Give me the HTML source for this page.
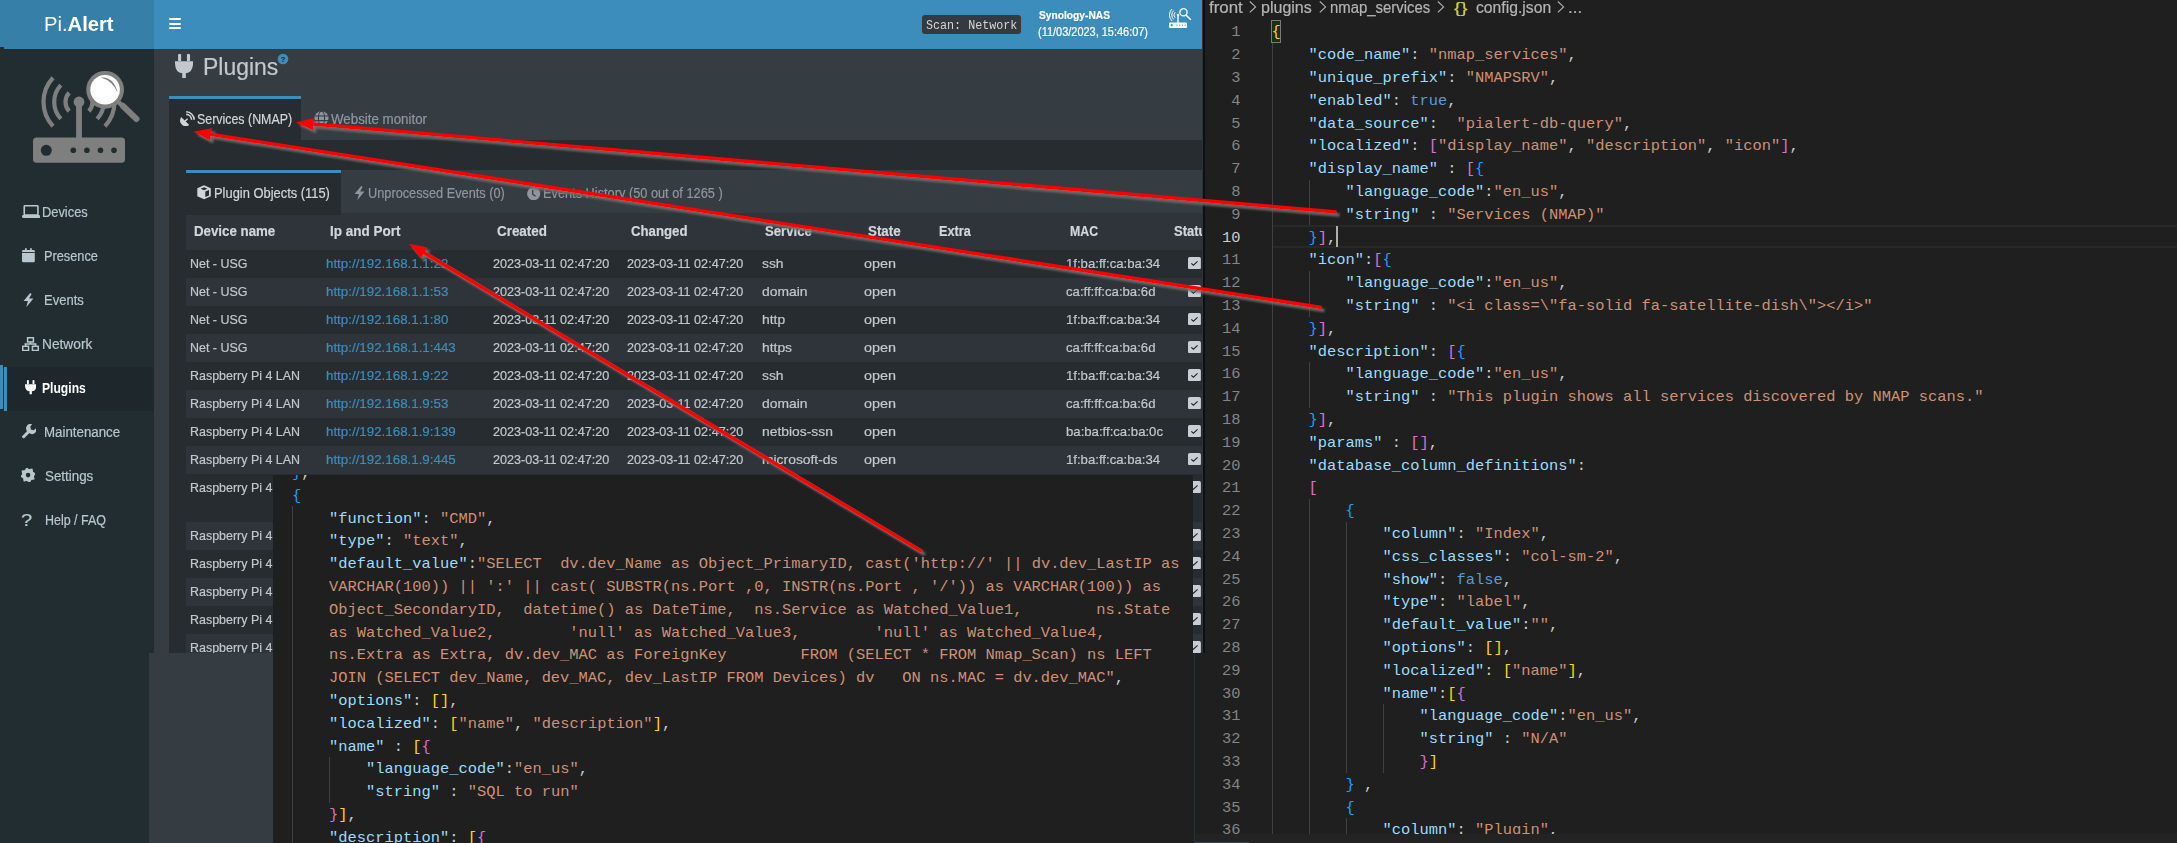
<!DOCTYPE html>
<html><head><meta charset="utf-8">
<style>
*{margin:0;padding:0;box-sizing:border-box}
html,body{width:2177px;height:843px;overflow:hidden;background:#1f1f1f}
body{position:relative;font-family:"Liberation Sans",sans-serif}
.a{position:absolute}
.t{position:absolute;white-space:pre;line-height:1;-webkit-text-stroke:0.2px currentColor}
#web{position:absolute;left:0;top:0;width:1203px;height:653px;overflow:hidden;background:#353c42}
.cl{position:absolute;white-space:pre;font-family:"Liberation Mono",monospace;font-size:15.42px;line-height:22.8px;height:22.8px}
svg{position:absolute}
</style></head><body>

<div id="web">
<div class="a" style="left:0px;top:0px;width:154px;height:49px;background:#367fa9;"></div>
<div class="a" style="left:154px;top:0px;width:1049px;height:49px;background:#3c8dbc;"></div>
<div class="a" style="left:0px;top:49px;width:154px;height:604px;background:#222d32;"></div>
<div class="t" style="left:44px;top:13.7px;font-size:20.5px;color:#fff;letter-spacing:0px;transform:scaleX(0.985);transform-origin:0 0;-webkit-text-stroke:0">Pi.<b>Alert</b></div>
<div class="a" style="left:0px;top:47px;width:4px;height:2px;background:#222d32;"></div>
<div class="a" style="left:169px;top:18.2px;width:12.4px;height:2.3px;background:#fff;border-radius:1px"></div>
<div class="a" style="left:169px;top:22.5px;width:12.4px;height:2.3px;background:#fff;border-radius:1px"></div>
<div class="a" style="left:169px;top:26.8px;width:12.4px;height:2.3px;background:#fff;border-radius:1px"></div>
<div class="a" style="left:922px;top:15px;width:99px;height:19px;background:#343a40;border-radius:3px"></div>
<div class="t" style="left:925.95px;top:19.82px;font-size:12.5px;color:#d6d6d6;font-weight:normal;letter-spacing:0px;font-family:'Liberation Mono',monospace;transform:scaleX(0.9367);transform-origin:0 0;-webkit-text-stroke:0;">Scan: Network</div>
<div class="t" style="left:1038.71px;top:9.18px;font-size:11.6px;color:#ffffff;font-weight:bold;letter-spacing:0px;font-family:'Liberation Sans',sans-serif;transform:scaleX(0.8813);transform-origin:0 0;">Synology-NAS</div>
<div class="t" style="left:1038.32px;top:25.99px;font-size:12.3px;color:#ffffff;font-weight:normal;letter-spacing:0px;font-family:'Liberation Sans',sans-serif;transform:scaleX(0.8907);transform-origin:0 0;">(11/03/2023, 15:46:07)</div>
<svg style="left:0;top:49px" width="154" height="140" viewBox="0 49 154 140">
<g fill="#7f7f7f">
<rect x="33" y="137.5" width="92" height="25.3" rx="3.5"/>
<rect x="76.1" y="101" width="5.8" height="37"/>
<circle cx="79" cy="102" r="5.4"/>
</g>
<g fill="#222d32"><circle cx="46.3" cy="150.3" r="5.5"/><circle cx="73.3" cy="150.3" r="2.8"/><circle cx="86.9" cy="150.3" r="2.8"/><circle cx="100.5" cy="150.3" r="2.8"/><circle cx="114" cy="150.3" r="2.8"/></g>
<g fill="none" stroke="#7f7f7f" stroke-width="4.2"><path d="M69.13,111.21 A13.5,13.5 0 0 1 69.13,92.79"/><path d="M88.87,92.79 A13.5,13.5 0 0 1 88.87,111.21"/><path d="M60.86,118.91 A24.8,24.8 0 0 1 60.86,85.09"/><path d="M97.14,85.09 A24.8,24.8 0 0 1 97.14,118.91"/><path d="M53.04,126.21 A35.5,35.5 0 0 1 53.04,77.79"/><path d="M104.96,77.79 A35.5,35.5 0 0 1 104.96,126.21"/></g>
<line x1="116" y1="100" x2="124" y2="107" stroke="#7f7f7f" stroke-width="4.6"/>
<line x1="123" y1="106" x2="136.5" y2="119" stroke="#7f7f7f" stroke-width="6" stroke-linecap="round"/>
<circle cx="105.1" cy="89.8" r="18.9" fill="#7f7f7f"/>
<circle cx="105.1" cy="89.8" r="14.8" fill="#ffffff"/>
<path d="M 100.5 77.2 Q 114 77 117.5 92.5 Q 113 81 100.5 77.2 Z" fill="#7f7f7f"/>
</svg>
<div class="a" style="left:7px;top:367px;width:147px;height:44px;background:#1e282c;"></div>
<div class="a" style="left:0px;top:365px;width:2.5px;height:44px;background:#3c8dbc;"></div>
<div class="a" style="left:4px;top:367px;width:3px;height:44px;background:#3c8dbc;"></div>
<div class="t" style="left:41.75px;top:205.25px;font-size:14px;color:#b8c7ce;font-weight:normal;letter-spacing:0px;font-family:'Liberation Sans',sans-serif;transform:scaleX(0.9182);transform-origin:0 0;">Devices</div>
<div class="t" style="left:44.45px;top:249.25px;font-size:14px;color:#b8c7ce;font-weight:normal;letter-spacing:0px;font-family:'Liberation Sans',sans-serif;transform:scaleX(0.9116);transform-origin:0 0;">Presence</div>
<div class="t" style="left:44.43px;top:293.25px;font-size:14px;color:#b8c7ce;font-weight:normal;letter-spacing:0px;font-family:'Liberation Sans',sans-serif;transform:scaleX(0.9284);transform-origin:0 0;">Events</div>
<div class="t" style="left:41.67px;top:337.25px;font-size:14px;color:#b8c7ce;font-weight:normal;letter-spacing:0px;font-family:'Liberation Sans',sans-serif;transform:scaleX(0.9798);transform-origin:0 0;">Network</div>
<div class="t" style="left:41.89px;top:381.25px;font-size:14px;color:#ffffff;font-weight:bold;letter-spacing:0px;font-family:'Liberation Sans',sans-serif;transform:scaleX(0.8665);transform-origin:0 0;-webkit-text-stroke:0;">Plugins</div>
<div class="t" style="left:44.41px;top:425.25px;font-size:14px;color:#b8c7ce;font-weight:normal;letter-spacing:0px;font-family:'Liberation Sans',sans-serif;transform:scaleX(0.9490);transform-origin:0 0;">Maintenance</div>
<div class="t" style="left:44.59px;top:469.25px;font-size:14px;color:#b8c7ce;font-weight:normal;letter-spacing:0px;font-family:'Liberation Sans',sans-serif;transform:scaleX(0.9546);transform-origin:0 0;">Settings</div>
<div class="t" style="left:44.68px;top:513.25px;font-size:14px;color:#b8c7ce;font-weight:normal;letter-spacing:0px;font-family:'Liberation Sans',sans-serif;transform:scaleX(0.8899);transform-origin:0 0;">Help / FAQ</div>
<div class="t" style="left:203.12px;top:55.93px;font-size:23px;color:#c2c8cd;font-weight:normal;letter-spacing:0px;font-family:'Liberation Sans',sans-serif;transform:scaleX(0.9970);transform-origin:0 0;">Plugins</div>
<svg style="left:277px;top:53px" width="12" height="12"><circle cx="6" cy="6" r="5.3" fill="#3c8dbc"/><text x="6" y="9" font-size="7.5" text-anchor="middle" fill="#223" font-family="Liberation Sans" font-weight="bold">?</text></svg>
<div class="a" style="left:169px;top:96px;width:132px;height:3px;background:#3c8dbc;"></div>
<div class="a" style="left:169px;top:99px;width:132px;height:41px;background:#272c30;"></div>
<div class="a" style="left:169px;top:140px;width:1034px;height:513px;background:#272c30;"></div>
<div class="t" style="left:197.04px;top:112.15px;font-size:14px;color:#d2d6da;font-weight:normal;letter-spacing:0px;font-family:'Liberation Sans',sans-serif;transform:scaleX(0.8862);transform-origin:0 0;">Services (NMAP)</div>
<div class="t" style="left:331.34px;top:112.15px;font-size:14px;color:#8f979e;font-weight:normal;letter-spacing:0px;font-family:'Liberation Sans',sans-serif;transform:scaleX(0.9519);transform-origin:0 0;">Website monitor</div>
<div class="a" style="left:186px;top:170px;width:1017px;height:43px;background:#353c42;"></div>
<div class="a" style="left:186px;top:170px;width:155px;height:3px;background:#3c8dbc;"></div>
<div class="a" style="left:186px;top:173px;width:155px;height:41px;background:#272c30;"></div>
<div class="t" style="left:213.74px;top:185.95px;font-size:14px;color:#d2d6da;font-weight:normal;letter-spacing:0px;font-family:'Liberation Sans',sans-serif;transform:scaleX(0.9213);transform-origin:0 0;">Plugin Objects (115)</div>
<div class="t" style="left:367.72px;top:185.95px;font-size:14px;color:#8f979e;font-weight:normal;letter-spacing:0px;font-family:'Liberation Sans',sans-serif;transform:scaleX(0.9107);transform-origin:0 0;">Unprocessed Events (0)</div>
<div class="t" style="left:543.45px;top:185.95px;font-size:14px;color:#8f979e;font-weight:normal;letter-spacing:0px;font-family:'Liberation Sans',sans-serif;transform:scaleX(0.9125);transform-origin:0 0;">Events History (50 out of 1265 )</div>
<div class="a" style="left:186px;top:213px;width:1017px;height:37px;background:#2e3439;"></div>
<div class="t" style="left:193.81px;top:224.35px;font-size:14px;color:#d2d6da;font-weight:bold;letter-spacing:0px;font-family:'Liberation Sans',sans-serif;transform:scaleX(0.9490);transform-origin:0 0;">Device name</div>
<div class="t" style="left:329.50px;top:224.35px;font-size:14px;color:#d2d6da;font-weight:bold;letter-spacing:0px;font-family:'Liberation Sans',sans-serif;transform:scaleX(0.9638);transform-origin:0 0;">Ip and Port</div>
<div class="t" style="left:496.65px;top:224.35px;font-size:14px;color:#d2d6da;font-weight:bold;letter-spacing:0px;font-family:'Liberation Sans',sans-serif;transform:scaleX(0.9579);transform-origin:0 0;">Created</div>
<div class="t" style="left:630.76px;top:224.35px;font-size:14px;color:#d2d6da;font-weight:bold;letter-spacing:0px;font-family:'Liberation Sans',sans-serif;transform:scaleX(0.9436);transform-origin:0 0;">Changed</div>
<div class="t" style="left:765.42px;top:224.35px;font-size:14px;color:#d2d6da;font-weight:bold;letter-spacing:0px;font-family:'Liberation Sans',sans-serif;transform:scaleX(0.9400);transform-origin:0 0;">Service</div>
<div class="t" style="left:868.22px;top:224.35px;font-size:14px;color:#d2d6da;font-weight:bold;letter-spacing:0px;font-family:'Liberation Sans',sans-serif;transform:scaleX(0.9535);transform-origin:0 0;">State</div>
<div class="t" style="left:939.45px;top:224.35px;font-size:14px;color:#d2d6da;font-weight:bold;letter-spacing:0px;font-family:'Liberation Sans',sans-serif;transform:scaleX(0.9042);transform-origin:0 0;">Extra</div>
<div class="t" style="left:1069.98px;top:224.35px;font-size:14px;color:#d2d6da;font-weight:bold;letter-spacing:0px;font-family:'Liberation Sans',sans-serif;transform:scaleX(0.8801);transform-origin:0 0;">MAC</div>
<div class="t" style="left:1174.02px;top:224.35px;font-size:14px;color:#d2d6da;font-weight:bold;letter-spacing:0px;font-family:'Liberation Sans',sans-serif;transform:scaleX(0.9300);transform-origin:0 0;">Status</div>
<div class="a" style="left:186px;top:213px;width:155px;height:1.7px;background:#272c30;"></div>
<div class="a" style="left:186px;top:250px;width:1017px;height:28px;background:#272c30;"></div>
<div class="t" style="left:190.48px;top:256.66px;font-size:13.4px;color:#c2c8cd;font-weight:normal;letter-spacing:0px;font-family:'Liberation Sans',sans-serif;transform:scaleX(0.9300);transform-origin:0 0;">Net - USG</div>
<div class="t" style="left:325.67px;top:256.66px;font-size:13.4px;color:#3c8dbc;font-weight:normal;letter-spacing:0px;font-family:'Liberation Sans',sans-serif;transform:scaleX(0.9957);transform-origin:0 0;">http://192.168.1.1:22</div>
<div class="t" style="left:492.97px;top:256.66px;font-size:13.4px;color:#c2c8cd;font-weight:normal;letter-spacing:0px;font-family:'Liberation Sans',sans-serif;transform:scaleX(0.9421);transform-origin:0 0;">2023-03-11 02:47:20</div>
<div class="t" style="left:627.47px;top:256.66px;font-size:13.4px;color:#c2c8cd;font-weight:normal;letter-spacing:0px;font-family:'Liberation Sans',sans-serif;transform:scaleX(0.9421);transform-origin:0 0;">2023-03-11 02:47:20</div>
<div class="t" style="left:762.11px;top:256.66px;font-size:13.4px;color:#c2c8cd;font-weight:normal;letter-spacing:0px;font-family:'Liberation Sans',sans-serif;transform:scaleX(1.0350);transform-origin:0 0;">ssh</div>
<div class="t" style="left:864.20px;top:256.66px;font-size:13.4px;color:#c2c8cd;font-weight:normal;letter-spacing:0px;font-family:'Liberation Sans',sans-serif;transform:scaleX(1.0748);transform-origin:0 0;">open</div>
<div class="t" style="left:1066.00px;top:256.66px;font-size:13.4px;color:#c2c8cd;font-weight:normal;letter-spacing:0px;font-family:'Liberation Sans',sans-serif;transform:scaleX(0.9822);transform-origin:0 0;">1f:ba:ff:ca:ba:34</div>
<svg style="left:1187.8px;top:256.6px" width="13" height="12.4"><rect x="0" y="0" width="12.9" height="12.3" rx="1.8" fill="#c9ced4"/><path d="M3.3,6.3 L5.4,8.2 L9.6,4.3" fill="none" stroke="#1e2226" stroke-width="1.1"/></svg>
<div class="a" style="left:186px;top:278px;width:1017px;height:28px;background:#2e3439;"></div>
<div class="t" style="left:190.48px;top:284.66px;font-size:13.4px;color:#c2c8cd;font-weight:normal;letter-spacing:0px;font-family:'Liberation Sans',sans-serif;transform:scaleX(0.9300);transform-origin:0 0;">Net - USG</div>
<div class="t" style="left:325.67px;top:284.66px;font-size:13.4px;color:#3c8dbc;font-weight:normal;letter-spacing:0px;font-family:'Liberation Sans',sans-serif;transform:scaleX(0.9957);transform-origin:0 0;">http://192.168.1.1:53</div>
<div class="t" style="left:492.97px;top:284.66px;font-size:13.4px;color:#c2c8cd;font-weight:normal;letter-spacing:0px;font-family:'Liberation Sans',sans-serif;transform:scaleX(0.9421);transform-origin:0 0;">2023-03-11 02:47:20</div>
<div class="t" style="left:627.47px;top:284.66px;font-size:13.4px;color:#c2c8cd;font-weight:normal;letter-spacing:0px;font-family:'Liberation Sans',sans-serif;transform:scaleX(0.9421);transform-origin:0 0;">2023-03-11 02:47:20</div>
<div class="t" style="left:761.92px;top:284.66px;font-size:13.4px;color:#c2c8cd;font-weight:normal;letter-spacing:0px;font-family:'Liberation Sans',sans-serif;transform:scaleX(1.0350);transform-origin:0 0;">domain</div>
<div class="t" style="left:864.20px;top:284.66px;font-size:13.4px;color:#c2c8cd;font-weight:normal;letter-spacing:0px;font-family:'Liberation Sans',sans-serif;transform:scaleX(1.0748);transform-origin:0 0;">open</div>
<div class="t" style="left:1066.44px;top:284.66px;font-size:13.4px;color:#c2c8cd;font-weight:normal;letter-spacing:0px;font-family:'Liberation Sans',sans-serif;transform:scaleX(0.9822);transform-origin:0 0;">ca:ff:ff:ca:ba:6d</div>
<svg style="left:1187.8px;top:284.6px" width="13" height="12.4"><rect x="0" y="0" width="12.9" height="12.3" rx="1.8" fill="#c9ced4"/><path d="M3.3,6.3 L5.4,8.2 L9.6,4.3" fill="none" stroke="#1e2226" stroke-width="1.1"/></svg>
<div class="a" style="left:186px;top:306px;width:1017px;height:28px;background:#272c30;"></div>
<div class="t" style="left:190.48px;top:312.66px;font-size:13.4px;color:#c2c8cd;font-weight:normal;letter-spacing:0px;font-family:'Liberation Sans',sans-serif;transform:scaleX(0.9300);transform-origin:0 0;">Net - USG</div>
<div class="t" style="left:325.67px;top:312.66px;font-size:13.4px;color:#3c8dbc;font-weight:normal;letter-spacing:0px;font-family:'Liberation Sans',sans-serif;transform:scaleX(0.9957);transform-origin:0 0;">http://192.168.1.1:80</div>
<div class="t" style="left:492.97px;top:312.66px;font-size:13.4px;color:#c2c8cd;font-weight:normal;letter-spacing:0px;font-family:'Liberation Sans',sans-serif;transform:scaleX(0.9421);transform-origin:0 0;">2023-03-11 02:47:20</div>
<div class="t" style="left:627.47px;top:312.66px;font-size:13.4px;color:#c2c8cd;font-weight:normal;letter-spacing:0px;font-family:'Liberation Sans',sans-serif;transform:scaleX(0.9421);transform-origin:0 0;">2023-03-11 02:47:20</div>
<div class="t" style="left:761.54px;top:312.66px;font-size:13.4px;color:#c2c8cd;font-weight:normal;letter-spacing:0px;font-family:'Liberation Sans',sans-serif;transform:scaleX(1.0350);transform-origin:0 0;">http</div>
<div class="t" style="left:864.20px;top:312.66px;font-size:13.4px;color:#c2c8cd;font-weight:normal;letter-spacing:0px;font-family:'Liberation Sans',sans-serif;transform:scaleX(1.0748);transform-origin:0 0;">open</div>
<div class="t" style="left:1066.00px;top:312.66px;font-size:13.4px;color:#c2c8cd;font-weight:normal;letter-spacing:0px;font-family:'Liberation Sans',sans-serif;transform:scaleX(0.9822);transform-origin:0 0;">1f:ba:ff:ca:ba:34</div>
<svg style="left:1187.8px;top:312.6px" width="13" height="12.4"><rect x="0" y="0" width="12.9" height="12.3" rx="1.8" fill="#c9ced4"/><path d="M3.3,6.3 L5.4,8.2 L9.6,4.3" fill="none" stroke="#1e2226" stroke-width="1.1"/></svg>
<div class="a" style="left:186px;top:334px;width:1017px;height:28px;background:#2e3439;"></div>
<div class="t" style="left:190.48px;top:340.66px;font-size:13.4px;color:#c2c8cd;font-weight:normal;letter-spacing:0px;font-family:'Liberation Sans',sans-serif;transform:scaleX(0.9300);transform-origin:0 0;">Net - USG</div>
<div class="t" style="left:325.67px;top:340.66px;font-size:13.4px;color:#3c8dbc;font-weight:normal;letter-spacing:0px;font-family:'Liberation Sans',sans-serif;transform:scaleX(0.9957);transform-origin:0 0;">http://192.168.1.1:443</div>
<div class="t" style="left:492.97px;top:340.66px;font-size:13.4px;color:#c2c8cd;font-weight:normal;letter-spacing:0px;font-family:'Liberation Sans',sans-serif;transform:scaleX(0.9421);transform-origin:0 0;">2023-03-11 02:47:20</div>
<div class="t" style="left:627.47px;top:340.66px;font-size:13.4px;color:#c2c8cd;font-weight:normal;letter-spacing:0px;font-family:'Liberation Sans',sans-serif;transform:scaleX(0.9421);transform-origin:0 0;">2023-03-11 02:47:20</div>
<div class="t" style="left:761.54px;top:340.66px;font-size:13.4px;color:#c2c8cd;font-weight:normal;letter-spacing:0px;font-family:'Liberation Sans',sans-serif;transform:scaleX(1.0350);transform-origin:0 0;">https</div>
<div class="t" style="left:864.20px;top:340.66px;font-size:13.4px;color:#c2c8cd;font-weight:normal;letter-spacing:0px;font-family:'Liberation Sans',sans-serif;transform:scaleX(1.0748);transform-origin:0 0;">open</div>
<div class="t" style="left:1066.44px;top:340.66px;font-size:13.4px;color:#c2c8cd;font-weight:normal;letter-spacing:0px;font-family:'Liberation Sans',sans-serif;transform:scaleX(0.9822);transform-origin:0 0;">ca:ff:ff:ca:ba:6d</div>
<svg style="left:1187.8px;top:340.6px" width="13" height="12.4"><rect x="0" y="0" width="12.9" height="12.3" rx="1.8" fill="#c9ced4"/><path d="M3.3,6.3 L5.4,8.2 L9.6,4.3" fill="none" stroke="#1e2226" stroke-width="1.1"/></svg>
<div class="a" style="left:186px;top:362px;width:1017px;height:28px;background:#272c30;"></div>
<div class="t" style="left:190.48px;top:368.66px;font-size:13.4px;color:#c2c8cd;font-weight:normal;letter-spacing:0px;font-family:'Liberation Sans',sans-serif;transform:scaleX(0.9300);transform-origin:0 0;">Raspberry Pi 4 LAN</div>
<div class="t" style="left:325.67px;top:368.66px;font-size:13.4px;color:#3c8dbc;font-weight:normal;letter-spacing:0px;font-family:'Liberation Sans',sans-serif;transform:scaleX(0.9957);transform-origin:0 0;">http://192.168.1.9:22</div>
<div class="t" style="left:492.97px;top:368.66px;font-size:13.4px;color:#c2c8cd;font-weight:normal;letter-spacing:0px;font-family:'Liberation Sans',sans-serif;transform:scaleX(0.9421);transform-origin:0 0;">2023-03-11 02:47:20</div>
<div class="t" style="left:627.47px;top:368.66px;font-size:13.4px;color:#c2c8cd;font-weight:normal;letter-spacing:0px;font-family:'Liberation Sans',sans-serif;transform:scaleX(0.9421);transform-origin:0 0;">2023-03-11 02:47:20</div>
<div class="t" style="left:762.11px;top:368.66px;font-size:13.4px;color:#c2c8cd;font-weight:normal;letter-spacing:0px;font-family:'Liberation Sans',sans-serif;transform:scaleX(1.0350);transform-origin:0 0;">ssh</div>
<div class="t" style="left:864.20px;top:368.66px;font-size:13.4px;color:#c2c8cd;font-weight:normal;letter-spacing:0px;font-family:'Liberation Sans',sans-serif;transform:scaleX(1.0748);transform-origin:0 0;">open</div>
<div class="t" style="left:1066.00px;top:368.66px;font-size:13.4px;color:#c2c8cd;font-weight:normal;letter-spacing:0px;font-family:'Liberation Sans',sans-serif;transform:scaleX(0.9822);transform-origin:0 0;">1f:ba:ff:ca:ba:34</div>
<svg style="left:1187.8px;top:368.6px" width="13" height="12.4"><rect x="0" y="0" width="12.9" height="12.3" rx="1.8" fill="#c9ced4"/><path d="M3.3,6.3 L5.4,8.2 L9.6,4.3" fill="none" stroke="#1e2226" stroke-width="1.1"/></svg>
<div class="a" style="left:186px;top:390px;width:1017px;height:28px;background:#2e3439;"></div>
<div class="t" style="left:190.48px;top:396.66px;font-size:13.4px;color:#c2c8cd;font-weight:normal;letter-spacing:0px;font-family:'Liberation Sans',sans-serif;transform:scaleX(0.9300);transform-origin:0 0;">Raspberry Pi 4 LAN</div>
<div class="t" style="left:325.67px;top:396.66px;font-size:13.4px;color:#3c8dbc;font-weight:normal;letter-spacing:0px;font-family:'Liberation Sans',sans-serif;transform:scaleX(0.9957);transform-origin:0 0;">http://192.168.1.9:53</div>
<div class="t" style="left:492.97px;top:396.66px;font-size:13.4px;color:#c2c8cd;font-weight:normal;letter-spacing:0px;font-family:'Liberation Sans',sans-serif;transform:scaleX(0.9421);transform-origin:0 0;">2023-03-11 02:47:20</div>
<div class="t" style="left:627.47px;top:396.66px;font-size:13.4px;color:#c2c8cd;font-weight:normal;letter-spacing:0px;font-family:'Liberation Sans',sans-serif;transform:scaleX(0.9421);transform-origin:0 0;">2023-03-11 02:47:20</div>
<div class="t" style="left:761.92px;top:396.66px;font-size:13.4px;color:#c2c8cd;font-weight:normal;letter-spacing:0px;font-family:'Liberation Sans',sans-serif;transform:scaleX(1.0350);transform-origin:0 0;">domain</div>
<div class="t" style="left:864.20px;top:396.66px;font-size:13.4px;color:#c2c8cd;font-weight:normal;letter-spacing:0px;font-family:'Liberation Sans',sans-serif;transform:scaleX(1.0748);transform-origin:0 0;">open</div>
<div class="t" style="left:1066.44px;top:396.66px;font-size:13.4px;color:#c2c8cd;font-weight:normal;letter-spacing:0px;font-family:'Liberation Sans',sans-serif;transform:scaleX(0.9822);transform-origin:0 0;">ca:ff:ff:ca:ba:6d</div>
<svg style="left:1187.8px;top:396.6px" width="13" height="12.4"><rect x="0" y="0" width="12.9" height="12.3" rx="1.8" fill="#c9ced4"/><path d="M3.3,6.3 L5.4,8.2 L9.6,4.3" fill="none" stroke="#1e2226" stroke-width="1.1"/></svg>
<div class="a" style="left:186px;top:418px;width:1017px;height:28px;background:#272c30;"></div>
<div class="t" style="left:190.48px;top:424.66px;font-size:13.4px;color:#c2c8cd;font-weight:normal;letter-spacing:0px;font-family:'Liberation Sans',sans-serif;transform:scaleX(0.9300);transform-origin:0 0;">Raspberry Pi 4 LAN</div>
<div class="t" style="left:325.67px;top:424.66px;font-size:13.4px;color:#3c8dbc;font-weight:normal;letter-spacing:0px;font-family:'Liberation Sans',sans-serif;transform:scaleX(0.9957);transform-origin:0 0;">http://192.168.1.9:139</div>
<div class="t" style="left:492.97px;top:424.66px;font-size:13.4px;color:#c2c8cd;font-weight:normal;letter-spacing:0px;font-family:'Liberation Sans',sans-serif;transform:scaleX(0.9421);transform-origin:0 0;">2023-03-11 02:47:20</div>
<div class="t" style="left:627.47px;top:424.66px;font-size:13.4px;color:#c2c8cd;font-weight:normal;letter-spacing:0px;font-family:'Liberation Sans',sans-serif;transform:scaleX(0.9421);transform-origin:0 0;">2023-03-11 02:47:20</div>
<div class="t" style="left:761.58px;top:424.66px;font-size:13.4px;color:#c2c8cd;font-weight:normal;letter-spacing:0px;font-family:'Liberation Sans',sans-serif;transform:scaleX(1.0350);transform-origin:0 0;">netbios-ssn</div>
<div class="t" style="left:864.20px;top:424.66px;font-size:13.4px;color:#c2c8cd;font-weight:normal;letter-spacing:0px;font-family:'Liberation Sans',sans-serif;transform:scaleX(1.0748);transform-origin:0 0;">open</div>
<div class="t" style="left:1066.15px;top:424.66px;font-size:13.4px;color:#c2c8cd;font-weight:normal;letter-spacing:0px;font-family:'Liberation Sans',sans-serif;transform:scaleX(0.9822);transform-origin:0 0;">ba:ba:ff:ca:ba:0c</div>
<svg style="left:1187.8px;top:424.6px" width="13" height="12.4"><rect x="0" y="0" width="12.9" height="12.3" rx="1.8" fill="#c9ced4"/><path d="M3.3,6.3 L5.4,8.2 L9.6,4.3" fill="none" stroke="#1e2226" stroke-width="1.1"/></svg>
<div class="a" style="left:186px;top:446px;width:1017px;height:28px;background:#2e3439;"></div>
<div class="t" style="left:190.48px;top:452.66px;font-size:13.4px;color:#c2c8cd;font-weight:normal;letter-spacing:0px;font-family:'Liberation Sans',sans-serif;transform:scaleX(0.9300);transform-origin:0 0;">Raspberry Pi 4 LAN</div>
<div class="t" style="left:325.67px;top:452.66px;font-size:13.4px;color:#3c8dbc;font-weight:normal;letter-spacing:0px;font-family:'Liberation Sans',sans-serif;transform:scaleX(0.9957);transform-origin:0 0;">http://192.168.1.9:445</div>
<div class="t" style="left:492.97px;top:452.66px;font-size:13.4px;color:#c2c8cd;font-weight:normal;letter-spacing:0px;font-family:'Liberation Sans',sans-serif;transform:scaleX(0.9421);transform-origin:0 0;">2023-03-11 02:47:20</div>
<div class="t" style="left:627.47px;top:452.66px;font-size:13.4px;color:#c2c8cd;font-weight:normal;letter-spacing:0px;font-family:'Liberation Sans',sans-serif;transform:scaleX(0.9421);transform-origin:0 0;">2023-03-11 02:47:20</div>
<div class="t" style="left:761.58px;top:452.66px;font-size:13.4px;color:#c2c8cd;font-weight:normal;letter-spacing:0px;font-family:'Liberation Sans',sans-serif;transform:scaleX(1.0350);transform-origin:0 0;">microsoft-ds</div>
<div class="t" style="left:864.20px;top:452.66px;font-size:13.4px;color:#c2c8cd;font-weight:normal;letter-spacing:0px;font-family:'Liberation Sans',sans-serif;transform:scaleX(1.0748);transform-origin:0 0;">open</div>
<div class="t" style="left:1066.00px;top:452.66px;font-size:13.4px;color:#c2c8cd;font-weight:normal;letter-spacing:0px;font-family:'Liberation Sans',sans-serif;transform:scaleX(0.9822);transform-origin:0 0;">1f:ba:ff:ca:ba:34</div>
<svg style="left:1187.8px;top:452.6px" width="13" height="12.4"><rect x="0" y="0" width="12.9" height="12.3" rx="1.8" fill="#c9ced4"/><path d="M3.3,6.3 L5.4,8.2 L9.6,4.3" fill="none" stroke="#1e2226" stroke-width="1.1"/></svg>
<div class="a" style="left:186px;top:474px;width:1017px;height:48px;background:#272c30;"></div>
<div class="t" style="left:190.48px;top:480.66px;font-size:13.4px;color:#c2c8cd;font-weight:normal;letter-spacing:0px;font-family:'Liberation Sans',sans-serif;transform:scaleX(0.9300);transform-origin:0 0;">Raspberry Pi 4 LAN</div>
<div class="t" style="left:325.67px;top:480.66px;font-size:13.4px;color:#3c8dbc;font-weight:normal;letter-spacing:0px;font-family:'Liberation Sans',sans-serif;transform:scaleX(0.9957);transform-origin:0 0;">http://192.168.1.9:548</div>
<div class="t" style="left:492.97px;top:480.66px;font-size:13.4px;color:#c2c8cd;font-weight:normal;letter-spacing:0px;font-family:'Liberation Sans',sans-serif;transform:scaleX(0.9421);transform-origin:0 0;">2023-03-11 02:47:20</div>
<div class="t" style="left:627.47px;top:480.66px;font-size:13.4px;color:#c2c8cd;font-weight:normal;letter-spacing:0px;font-family:'Liberation Sans',sans-serif;transform:scaleX(0.9421);transform-origin:0 0;">2023-03-11 02:47:20</div>
<div class="t" style="left:761.91px;top:480.66px;font-size:13.4px;color:#c2c8cd;font-weight:normal;letter-spacing:0px;font-family:'Liberation Sans',sans-serif;transform:scaleX(1.0350);transform-origin:0 0;">afp</div>
<div class="t" style="left:864.20px;top:480.66px;font-size:13.4px;color:#c2c8cd;font-weight:normal;letter-spacing:0px;font-family:'Liberation Sans',sans-serif;transform:scaleX(1.0748);transform-origin:0 0;">open</div>
<div class="t" style="left:1066.00px;top:480.66px;font-size:13.4px;color:#c2c8cd;font-weight:normal;letter-spacing:0px;font-family:'Liberation Sans',sans-serif;transform:scaleX(0.9822);transform-origin:0 0;">1f:ba:ff:ca:ba:34</div>
<svg style="left:1187.8px;top:480.6px" width="13" height="12.4"><rect x="0" y="0" width="12.9" height="12.3" rx="1.8" fill="#c9ced4"/><path d="M3.3,6.3 L5.4,8.2 L9.6,4.3" fill="none" stroke="#1e2226" stroke-width="1.1"/></svg>
<div class="a" style="left:186px;top:522px;width:1017px;height:28px;background:#2e3439;"></div>
<div class="t" style="left:190.48px;top:528.66px;font-size:13.4px;color:#c2c8cd;font-weight:normal;letter-spacing:0px;font-family:'Liberation Sans',sans-serif;transform:scaleX(0.9300);transform-origin:0 0;">Raspberry Pi 4 LAN</div>
<div class="t" style="left:325.67px;top:528.66px;font-size:13.4px;color:#3c8dbc;font-weight:normal;letter-spacing:0px;font-family:'Liberation Sans',sans-serif;transform:scaleX(0.9957);transform-origin:0 0;">http://192.168.1.9:631</div>
<div class="t" style="left:492.97px;top:528.66px;font-size:13.4px;color:#c2c8cd;font-weight:normal;letter-spacing:0px;font-family:'Liberation Sans',sans-serif;transform:scaleX(0.9421);transform-origin:0 0;">2023-03-11 02:47:20</div>
<div class="t" style="left:627.47px;top:528.66px;font-size:13.4px;color:#c2c8cd;font-weight:normal;letter-spacing:0px;font-family:'Liberation Sans',sans-serif;transform:scaleX(0.9421);transform-origin:0 0;">2023-03-11 02:47:20</div>
<div class="t" style="left:761.57px;top:528.66px;font-size:13.4px;color:#c2c8cd;font-weight:normal;letter-spacing:0px;font-family:'Liberation Sans',sans-serif;transform:scaleX(1.0350);transform-origin:0 0;">ipp</div>
<div class="t" style="left:864.20px;top:528.66px;font-size:13.4px;color:#c2c8cd;font-weight:normal;letter-spacing:0px;font-family:'Liberation Sans',sans-serif;transform:scaleX(1.0748);transform-origin:0 0;">open</div>
<div class="t" style="left:1066.00px;top:528.66px;font-size:13.4px;color:#c2c8cd;font-weight:normal;letter-spacing:0px;font-family:'Liberation Sans',sans-serif;transform:scaleX(0.9822);transform-origin:0 0;">1f:ba:ff:ca:ba:34</div>
<svg style="left:1187.8px;top:528.6px" width="13" height="12.4"><rect x="0" y="0" width="12.9" height="12.3" rx="1.8" fill="#c9ced4"/><path d="M3.3,6.3 L5.4,8.2 L9.6,4.3" fill="none" stroke="#1e2226" stroke-width="1.1"/></svg>
<div class="a" style="left:186px;top:550px;width:1017px;height:28px;background:#272c30;"></div>
<div class="t" style="left:190.48px;top:556.66px;font-size:13.4px;color:#c2c8cd;font-weight:normal;letter-spacing:0px;font-family:'Liberation Sans',sans-serif;transform:scaleX(0.9300);transform-origin:0 0;">Raspberry Pi 4 LAN</div>
<div class="t" style="left:325.67px;top:556.66px;font-size:13.4px;color:#3c8dbc;font-weight:normal;letter-spacing:0px;font-family:'Liberation Sans',sans-serif;transform:scaleX(0.9957);transform-origin:0 0;">http://192.168.1.9:3389</div>
<div class="t" style="left:492.97px;top:556.66px;font-size:13.4px;color:#c2c8cd;font-weight:normal;letter-spacing:0px;font-family:'Liberation Sans',sans-serif;transform:scaleX(0.9421);transform-origin:0 0;">2023-03-11 02:47:20</div>
<div class="t" style="left:627.47px;top:556.66px;font-size:13.4px;color:#c2c8cd;font-weight:normal;letter-spacing:0px;font-family:'Liberation Sans',sans-serif;transform:scaleX(0.9421);transform-origin:0 0;">2023-03-11 02:47:20</div>
<div class="t" style="left:761.58px;top:556.66px;font-size:13.4px;color:#c2c8cd;font-weight:normal;letter-spacing:0px;font-family:'Liberation Sans',sans-serif;transform:scaleX(1.0350);transform-origin:0 0;">ms-wbt-server</div>
<div class="t" style="left:864.20px;top:556.66px;font-size:13.4px;color:#c2c8cd;font-weight:normal;letter-spacing:0px;font-family:'Liberation Sans',sans-serif;transform:scaleX(1.0748);transform-origin:0 0;">open</div>
<div class="t" style="left:1066.00px;top:556.66px;font-size:13.4px;color:#c2c8cd;font-weight:normal;letter-spacing:0px;font-family:'Liberation Sans',sans-serif;transform:scaleX(0.9822);transform-origin:0 0;">1f:ba:ff:ca:ba:34</div>
<svg style="left:1187.8px;top:556.6px" width="13" height="12.4"><rect x="0" y="0" width="12.9" height="12.3" rx="1.8" fill="#c9ced4"/><path d="M3.3,6.3 L5.4,8.2 L9.6,4.3" fill="none" stroke="#1e2226" stroke-width="1.1"/></svg>
<div class="a" style="left:186px;top:578px;width:1017px;height:28px;background:#2e3439;"></div>
<div class="t" style="left:190.48px;top:584.66px;font-size:13.4px;color:#c2c8cd;font-weight:normal;letter-spacing:0px;font-family:'Liberation Sans',sans-serif;transform:scaleX(0.9300);transform-origin:0 0;">Raspberry Pi 4 LAN</div>
<div class="t" style="left:325.67px;top:584.66px;font-size:13.4px;color:#3c8dbc;font-weight:normal;letter-spacing:0px;font-family:'Liberation Sans',sans-serif;transform:scaleX(0.9957);transform-origin:0 0;">http://192.168.1.9:5900</div>
<div class="t" style="left:492.97px;top:584.66px;font-size:13.4px;color:#c2c8cd;font-weight:normal;letter-spacing:0px;font-family:'Liberation Sans',sans-serif;transform:scaleX(0.9421);transform-origin:0 0;">2023-03-11 02:47:20</div>
<div class="t" style="left:627.47px;top:584.66px;font-size:13.4px;color:#c2c8cd;font-weight:normal;letter-spacing:0px;font-family:'Liberation Sans',sans-serif;transform:scaleX(0.9421);transform-origin:0 0;">2023-03-11 02:47:20</div>
<div class="t" style="left:762.45px;top:584.66px;font-size:13.4px;color:#c2c8cd;font-weight:normal;letter-spacing:0px;font-family:'Liberation Sans',sans-serif;transform:scaleX(1.0350);transform-origin:0 0;">vnc</div>
<div class="t" style="left:864.20px;top:584.66px;font-size:13.4px;color:#c2c8cd;font-weight:normal;letter-spacing:0px;font-family:'Liberation Sans',sans-serif;transform:scaleX(1.0748);transform-origin:0 0;">open</div>
<div class="t" style="left:1066.00px;top:584.66px;font-size:13.4px;color:#c2c8cd;font-weight:normal;letter-spacing:0px;font-family:'Liberation Sans',sans-serif;transform:scaleX(0.9822);transform-origin:0 0;">1f:ba:ff:ca:ba:34</div>
<svg style="left:1187.8px;top:584.6px" width="13" height="12.4"><rect x="0" y="0" width="12.9" height="12.3" rx="1.8" fill="#c9ced4"/><path d="M3.3,6.3 L5.4,8.2 L9.6,4.3" fill="none" stroke="#1e2226" stroke-width="1.1"/></svg>
<div class="a" style="left:186px;top:606px;width:1017px;height:28px;background:#272c30;"></div>
<div class="t" style="left:190.48px;top:612.66px;font-size:13.4px;color:#c2c8cd;font-weight:normal;letter-spacing:0px;font-family:'Liberation Sans',sans-serif;transform:scaleX(0.9300);transform-origin:0 0;">Raspberry Pi 4 LAN</div>
<div class="t" style="left:325.67px;top:612.66px;font-size:13.4px;color:#3c8dbc;font-weight:normal;letter-spacing:0px;font-family:'Liberation Sans',sans-serif;transform:scaleX(0.9957);transform-origin:0 0;">http://192.168.1.9:8080</div>
<div class="t" style="left:492.97px;top:612.66px;font-size:13.4px;color:#c2c8cd;font-weight:normal;letter-spacing:0px;font-family:'Liberation Sans',sans-serif;transform:scaleX(0.9421);transform-origin:0 0;">2023-03-11 02:47:20</div>
<div class="t" style="left:627.47px;top:612.66px;font-size:13.4px;color:#c2c8cd;font-weight:normal;letter-spacing:0px;font-family:'Liberation Sans',sans-serif;transform:scaleX(0.9421);transform-origin:0 0;">2023-03-11 02:47:20</div>
<div class="t" style="left:761.54px;top:612.66px;font-size:13.4px;color:#c2c8cd;font-weight:normal;letter-spacing:0px;font-family:'Liberation Sans',sans-serif;transform:scaleX(1.0350);transform-origin:0 0;">http-proxy</div>
<div class="t" style="left:864.20px;top:612.66px;font-size:13.4px;color:#c2c8cd;font-weight:normal;letter-spacing:0px;font-family:'Liberation Sans',sans-serif;transform:scaleX(1.0748);transform-origin:0 0;">open</div>
<div class="t" style="left:1066.00px;top:612.66px;font-size:13.4px;color:#c2c8cd;font-weight:normal;letter-spacing:0px;font-family:'Liberation Sans',sans-serif;transform:scaleX(0.9822);transform-origin:0 0;">1f:ba:ff:ca:ba:34</div>
<svg style="left:1187.8px;top:612.6px" width="13" height="12.4"><rect x="0" y="0" width="12.9" height="12.3" rx="1.8" fill="#c9ced4"/><path d="M3.3,6.3 L5.4,8.2 L9.6,4.3" fill="none" stroke="#1e2226" stroke-width="1.1"/></svg>
<div class="a" style="left:186px;top:634px;width:1017px;height:28px;background:#2e3439;"></div>
<div class="t" style="left:190.48px;top:640.66px;font-size:13.4px;color:#c2c8cd;font-weight:normal;letter-spacing:0px;font-family:'Liberation Sans',sans-serif;transform:scaleX(0.9300);transform-origin:0 0;">Raspberry Pi 4 LAN</div>
<div class="t" style="left:325.67px;top:640.66px;font-size:13.4px;color:#3c8dbc;font-weight:normal;letter-spacing:0px;font-family:'Liberation Sans',sans-serif;transform:scaleX(0.9957);transform-origin:0 0;">http://192.168.1.9:9000</div>
<div class="t" style="left:492.97px;top:640.66px;font-size:13.4px;color:#c2c8cd;font-weight:normal;letter-spacing:0px;font-family:'Liberation Sans',sans-serif;transform:scaleX(0.9421);transform-origin:0 0;">2023-03-11 02:47:20</div>
<div class="t" style="left:627.47px;top:640.66px;font-size:13.4px;color:#c2c8cd;font-weight:normal;letter-spacing:0px;font-family:'Liberation Sans',sans-serif;transform:scaleX(0.9421);transform-origin:0 0;">2023-03-11 02:47:20</div>
<div class="t" style="left:761.91px;top:640.66px;font-size:13.4px;color:#c2c8cd;font-weight:normal;letter-spacing:0px;font-family:'Liberation Sans',sans-serif;transform:scaleX(1.0350);transform-origin:0 0;">cslistener</div>
<div class="t" style="left:864.20px;top:640.66px;font-size:13.4px;color:#c2c8cd;font-weight:normal;letter-spacing:0px;font-family:'Liberation Sans',sans-serif;transform:scaleX(1.0748);transform-origin:0 0;">open</div>
<div class="t" style="left:1066.00px;top:640.66px;font-size:13.4px;color:#c2c8cd;font-weight:normal;letter-spacing:0px;font-family:'Liberation Sans',sans-serif;transform:scaleX(0.9822);transform-origin:0 0;">1f:ba:ff:ca:ba:34</div>
<svg style="left:1187.8px;top:640.6px" width="13" height="12.4"><rect x="0" y="0" width="12.9" height="12.3" rx="1.8" fill="#c9ced4"/><path d="M3.3,6.3 L5.4,8.2 L9.6,4.3" fill="none" stroke="#1e2226" stroke-width="1.1"/></svg>
<svg style="left:21.8px;top:205px" width="18.2" height="13" viewBox="0 0 18.2 13"><rect x="2.25" y="0.75" width="13.7" height="9.2" rx="0.8" fill="none" stroke="#b8c7ce" stroke-width="1.6"/><rect x="0" y="9.9" width="18.2" height="3" rx="1.3" fill="#b8c7ce"/></svg>
<svg style="left:21.8px;top:248.4px" width="12.8" height="14.2" viewBox="0 0 12.8 14.2"><rect x="0" y="2.1" width="12.8" height="12.1" rx="1.2" fill="#b8c7ce"/><rect x="3" y="0" width="1.7" height="3.4" rx="0.5" fill="#b8c7ce"/><rect x="8.1" y="0" width="1.7" height="3.4" rx="0.5" fill="#b8c7ce"/><rect x="0" y="4.1" width="12.8" height="0.9" fill="#222d32"/></svg>
<svg style="left:22.8px;top:292.5px" width="10.8" height="14.3" viewBox="0 0 10.8 14.3"><path d="M7.2,0 L0.6,8.1 L4.9,8.1 L3.3,14.2 L10.4,5.6 L6.1,5.6 L8.6,0.9 Z" fill="#b8c7ce"/></svg>
<svg style="left:22.1px;top:336.6px" width="17" height="14.2" viewBox="0 0 17 14.2"><g fill="none" stroke="#b8c7ce" stroke-width="1.5"><rect x="5.6" y="0.75" width="5.8" height="4.2"/><rect x="0.75" y="9.3" width="5.8" height="4.2"/><rect x="10.45" y="9.3" width="5.8" height="4.2"/><path d="M8.5,5 V7.1 M2.5,7.1 H14.5 M3.6,7.1 V9.3 M13.4,7.1 V9.3"/></g></svg>
<svg style="left:24.9px;top:380.4px" width="11.4" height="14.2" viewBox="0 0 11.4 14.2"><g fill="#ffffff"><rect x="1.94" y="0" width="1.94" height="4.26" rx="0.8"/><rect x="7.52" y="0" width="1.94" height="4.26" rx="0.8"/><path d="M0,4.26 H11.4 V5.68 Q11.06,11.08 6.84,11.36 V14.2 H4.56 V11.36 Q0.34,11.08 0,5.68 Z"/></g></svg>
<svg style="left:21.6px;top:424.4px" width="14.7" height="14.3" viewBox="0 0 14.7 14.3"><path d="M1.6,12.7 L7.4,6.9" stroke="#b8c7ce" stroke-width="3" stroke-linecap="round"/><path d="M6.2,8.1 A4.4,4.4 0 0 1 10.2,0.3 L8.3,2.6 L8.9,5.4 L11.8,6.2 L14.2,4.2 A4.4,4.4 0 0 1 7.2,9 Z" fill="#b8c7ce"/></svg>
<svg style="left:21.3px;top:468px" width="14.2" height="14.2" viewBox="0 0 14.2 14.2"><circle cx="7.1" cy="7.1" r="5.3" fill="#b8c7ce"/><polygon points="14.06,5.71 12.30,8.13 13.00,11.04 10.04,11.51 8.49,14.06 6.07,12.30 3.16,13.00 2.69,10.04 0.14,8.49 1.90,6.07 1.20,3.16 4.16,2.69 5.71,0.14 8.13,1.90 11.04,1.20 11.51,4.16" fill="#b8c7ce" stroke="#b8c7ce" stroke-width="1.2" stroke-linejoin="round"/><circle cx="7.1" cy="7.1" r="2.3" fill="#222d32"/></svg>
<div class="t" style="left:21.08px;top:511.61px;font-size:17px;color:#b8c7ce;font-weight:normal;letter-spacing:0px;font-family:'Liberation Sans',sans-serif;transform:scaleX(1.1813);transform-origin:0 0;">?</div>
<svg style="left:174.9px;top:53.8px" width="18.1" height="24.1" viewBox="0 0 18.1 24.1"><g fill="#c2c8cd"><rect x="3.08" y="0" width="3.08" height="7.23" rx="0.8"/><rect x="11.95" y="0" width="3.08" height="7.23" rx="0.8"/><path d="M0,7.23 H18.1 V9.64 Q17.56,18.80 10.86,19.28 V24.1 H7.24 V19.28 Q0.54,18.80 0,9.64 Z"/></g></svg>
<svg style="left:179.5px;top:111px" width="15" height="15.3" viewBox="0 0 15 15.3"><path d="M1.2,6.3 L9,14.1 A5.6,5.6 0 0 1 1.2,6.3 Z" fill="#d2d6da" transform="rotate(0)"/><path d="M1.2,6.3 Q0.4,10.8 4.2,13.3 Q7.6,15.3 9,14.1 Z" fill="#d2d6da"/><path d="M5,10.3 L7.6,7.7" stroke="#d2d6da" stroke-width="1.4"/><g fill="none" stroke="#d2d6da" stroke-width="1.6"><path d="M6.2,3.4 A5.6,5.6 0 0 1 11.6,8.8"/><path d="M6.2,0.8 A8.3,8.3 0 0 1 14.2,8.8"/></g></svg>
<svg style="left:314px;top:110.5px" width="15" height="14.5" viewBox="0 0 15 14.5"><circle cx="7.5" cy="7.2" r="7" fill="#8f979e"/><g stroke="#353c42" stroke-width="1.1" fill="none"><ellipse cx="7.5" cy="7.2" rx="3.1" ry="7"/><path d="M0.5,5 H14.5 M0.5,9.6 H14.5"/></g></svg>
<svg style="left:197px;top:185.4px" width="14.1" height="14.5" viewBox="0 0 14.1 14.5"><path d="M7.05,0.3 L13.8,3.2 V11.3 L7.05,14.2 L0.3,11.3 V3.2 Z" fill="#d2d6da"/><path d="M3.6,3.7 L7.05,2.2 L10.5,3.7 L7.05,5.2 Z" fill="#272c30"/><path d="M8.3,6.6 L12,5 V10.4 L8.3,12 Z" fill="#272c30"/></svg>
<svg style="left:354.2px;top:185.8px" width="10.8" height="14.1" viewBox="0 0 10.8 14.1"><path d="M7.2,0 L0.6,8.1 L4.9,8.1 L3.3,14.2 L10.4,5.6 L6.1,5.6 L8.6,0.9 Z" fill="#8f979e"/></svg>
<svg style="left:527.3px;top:186.5px" width="13.4" height="13.4" viewBox="0 0 13.4 13.4"><circle cx="6.7" cy="6.7" r="6.6" fill="#8f979e"/><path d="M5.7,3 V7.2 L8.6,9.2" stroke="#353c42" stroke-width="1.3" fill="none"/></svg>
<svg style="left:1168px;top:8px" width="24" height="22" viewBox="0 0 24 22"><g fill="#fff"><rect x="1" y="14.5" width="18" height="5.5" rx="1"/><rect x="9.3" y="7" width="1.4" height="8"/><circle cx="10" cy="7" r="1.3"/></g><g fill="#3c8dbc"><circle cx="3.8" cy="17.2" r="1.1"/><circle cx="9" cy="17.2" r="0.6"/><circle cx="11.7" cy="17.2" r="0.6"/><circle cx="14.4" cy="17.2" r="0.6"/><circle cx="17.1" cy="17.2" r="0.6"/></g><g fill="none" stroke="#fff" stroke-width="1"><path d="M7.2,4.2 A4,4 0 0 0 7.2,9.8"/><path d="M5.6,2.6 A6.2,6.2 0 0 0 5.6,11.4"/><path d="M4,1 A8.4,8.4 0 0 0 4,13"/></g><circle cx="15.5" cy="4.3" r="3.6" fill="none" stroke="#fff" stroke-width="1.3"/><path d="M18,7 L22.5,11.5" stroke="#fff" stroke-width="1.6" stroke-linecap="round"/></svg>
</div>
<div class="a" style="left:0px;top:653px;width:149px;height:190px;background:#222d32;"></div>
<div class="a" style="left:149px;top:653px;width:124px;height:190px;background:#353c42;"></div>
<div class="a" style="left:1202.3px;top:0px;width:0.8px;height:653px;background:#2e343a;"></div>
<div class="a" style="left:1203px;top:0px;width:2px;height:653px;background:#0c1016;"></div>
<div class="a" style="left:1271.6px;top:225.4px;width:906px;height:22.8px;background:transparent;border-top:2px solid #282828;border-bottom:2px solid #282828"></div>
<div class="a" style="left:1271.2px;top:20.2px;width:9.8px;height:22.7px;background:rgba(0,100,0,0.25);border:1px solid #7a7a7a"></div>
<div class="cl" style="left:1190px;width:50.5px;text-align:right;top:21.49px;color:#858585">1</div>
<div class="cl" style="left:1271.6px;top:21.49px;color:#cccccc"><span style="color:#ffd700">{</span></div>
<div class="a" style="left:1271.6px;top:43.0px;width:1px;height:22.8px;background:#404040;"></div>
<div class="cl" style="left:1190px;width:50.5px;text-align:right;top:44.29px;color:#858585">2</div>
<div class="cl" style="left:1271.6px;top:44.29px;color:#cccccc">    <span style="color:#9cdcfe">"code_name"</span>: <span style="color:#ce9178">"nmap_services"</span>,</div>
<div class="a" style="left:1271.6px;top:65.8px;width:1px;height:22.8px;background:#404040;"></div>
<div class="cl" style="left:1190px;width:50.5px;text-align:right;top:67.09px;color:#858585">3</div>
<div class="cl" style="left:1271.6px;top:67.09px;color:#cccccc">    <span style="color:#9cdcfe">"unique_prefix"</span>: <span style="color:#ce9178">"NMAPSRV"</span>,</div>
<div class="a" style="left:1271.6px;top:88.6px;width:1px;height:22.8px;background:#404040;"></div>
<div class="cl" style="left:1190px;width:50.5px;text-align:right;top:89.89px;color:#858585">4</div>
<div class="cl" style="left:1271.6px;top:89.89px;color:#cccccc">    <span style="color:#9cdcfe">"enabled"</span>: <span style="color:#569cd6">true</span>,</div>
<div class="a" style="left:1271.6px;top:111.4px;width:1px;height:22.8px;background:#404040;"></div>
<div class="cl" style="left:1190px;width:50.5px;text-align:right;top:112.69px;color:#858585">5</div>
<div class="cl" style="left:1271.6px;top:112.69px;color:#cccccc">    <span style="color:#9cdcfe">"data_source"</span>:  <span style="color:#ce9178">"pialert-db-query"</span>,</div>
<div class="a" style="left:1271.6px;top:134.2px;width:1px;height:22.8px;background:#404040;"></div>
<div class="cl" style="left:1190px;width:50.5px;text-align:right;top:135.49px;color:#858585">6</div>
<div class="cl" style="left:1271.6px;top:135.49px;color:#cccccc">    <span style="color:#9cdcfe">"localized"</span>: <span style="color:#da70d6">[</span><span style="color:#ce9178">"display_name"</span>, <span style="color:#ce9178">"description"</span>, <span style="color:#ce9178">"icon"</span><span style="color:#da70d6">]</span>,</div>
<div class="a" style="left:1271.6px;top:157.0px;width:1px;height:22.8px;background:#404040;"></div>
<div class="cl" style="left:1190px;width:50.5px;text-align:right;top:158.29px;color:#858585">7</div>
<div class="cl" style="left:1271.6px;top:158.29px;color:#cccccc">    <span style="color:#9cdcfe">"display_name"</span> : <span style="color:#da70d6">[</span><span style="color:#179fff">{</span></div>
<div class="a" style="left:1271.6px;top:179.8px;width:1px;height:22.8px;background:#404040;"></div>
<div class="a" style="left:1308.6px;top:179.8px;width:1px;height:22.8px;background:#404040;"></div>
<div class="cl" style="left:1190px;width:50.5px;text-align:right;top:181.09px;color:#858585">8</div>
<div class="cl" style="left:1271.6px;top:181.09px;color:#cccccc">        <span style="color:#9cdcfe">"language_code"</span>:<span style="color:#ce9178">"en_us"</span>,</div>
<div class="a" style="left:1271.6px;top:202.6px;width:1px;height:22.8px;background:#404040;"></div>
<div class="a" style="left:1308.6px;top:202.6px;width:1px;height:22.8px;background:#404040;"></div>
<div class="cl" style="left:1190px;width:50.5px;text-align:right;top:203.89px;color:#858585">9</div>
<div class="cl" style="left:1271.6px;top:203.89px;color:#cccccc">        <span style="color:#9cdcfe">"string"</span> : <span style="color:#ce9178">"Services (NMAP)"</span></div>
<div class="a" style="left:1271.6px;top:225.4px;width:1px;height:22.8px;background:#404040;"></div>
<div class="cl" style="left:1190px;width:50.5px;text-align:right;top:226.69px;color:#cccccc">10</div>
<div class="cl" style="left:1271.6px;top:226.69px;color:#cccccc">    <span style="color:#179fff">}</span><span style="color:#da70d6">]</span>,</div>
<div class="a" style="left:1271.6px;top:248.2px;width:1px;height:22.8px;background:#404040;"></div>
<div class="cl" style="left:1190px;width:50.5px;text-align:right;top:249.49px;color:#858585">11</div>
<div class="cl" style="left:1271.6px;top:249.49px;color:#cccccc">    <span style="color:#9cdcfe">"icon"</span>:<span style="color:#da70d6">[</span><span style="color:#179fff">{</span></div>
<div class="a" style="left:1271.6px;top:271.0px;width:1px;height:22.8px;background:#404040;"></div>
<div class="a" style="left:1308.6px;top:271.0px;width:1px;height:22.8px;background:#404040;"></div>
<div class="cl" style="left:1190px;width:50.5px;text-align:right;top:272.29px;color:#858585">12</div>
<div class="cl" style="left:1271.6px;top:272.29px;color:#cccccc">        <span style="color:#9cdcfe">"language_code"</span>:<span style="color:#ce9178">"en_us"</span>,</div>
<div class="a" style="left:1271.6px;top:293.8px;width:1px;height:22.8px;background:#404040;"></div>
<div class="a" style="left:1308.6px;top:293.8px;width:1px;height:22.8px;background:#404040;"></div>
<div class="cl" style="left:1190px;width:50.5px;text-align:right;top:295.09px;color:#858585">13</div>
<div class="cl" style="left:1271.6px;top:295.09px;color:#cccccc">        <span style="color:#9cdcfe">"string"</span> : <span style="color:#ce9178">"&lt;i class=\"fa-solid fa-satellite-dish\"&gt;&lt;/i&gt;"</span></div>
<div class="a" style="left:1271.6px;top:316.6px;width:1px;height:22.8px;background:#404040;"></div>
<div class="cl" style="left:1190px;width:50.5px;text-align:right;top:317.89px;color:#858585">14</div>
<div class="cl" style="left:1271.6px;top:317.89px;color:#cccccc">    <span style="color:#179fff">}</span><span style="color:#da70d6">]</span>,</div>
<div class="a" style="left:1271.6px;top:339.4px;width:1px;height:22.8px;background:#404040;"></div>
<div class="cl" style="left:1190px;width:50.5px;text-align:right;top:340.69px;color:#858585">15</div>
<div class="cl" style="left:1271.6px;top:340.69px;color:#cccccc">    <span style="color:#9cdcfe">"description"</span>: <span style="color:#da70d6">[</span><span style="color:#179fff">{</span></div>
<div class="a" style="left:1271.6px;top:362.2px;width:1px;height:22.8px;background:#404040;"></div>
<div class="a" style="left:1308.6px;top:362.2px;width:1px;height:22.8px;background:#404040;"></div>
<div class="cl" style="left:1190px;width:50.5px;text-align:right;top:363.49px;color:#858585">16</div>
<div class="cl" style="left:1271.6px;top:363.49px;color:#cccccc">        <span style="color:#9cdcfe">"language_code"</span>:<span style="color:#ce9178">"en_us"</span>,</div>
<div class="a" style="left:1271.6px;top:385.0px;width:1px;height:22.8px;background:#404040;"></div>
<div class="a" style="left:1308.6px;top:385.0px;width:1px;height:22.8px;background:#404040;"></div>
<div class="cl" style="left:1190px;width:50.5px;text-align:right;top:386.29px;color:#858585">17</div>
<div class="cl" style="left:1271.6px;top:386.29px;color:#cccccc">        <span style="color:#9cdcfe">"string"</span> : <span style="color:#ce9178">"This plugin shows all services discovered by NMAP scans."</span></div>
<div class="a" style="left:1271.6px;top:407.8px;width:1px;height:22.8px;background:#404040;"></div>
<div class="cl" style="left:1190px;width:50.5px;text-align:right;top:409.09px;color:#858585">18</div>
<div class="cl" style="left:1271.6px;top:409.09px;color:#cccccc">    <span style="color:#179fff">}</span><span style="color:#da70d6">]</span>,</div>
<div class="a" style="left:1271.6px;top:430.6px;width:1px;height:22.8px;background:#404040;"></div>
<div class="cl" style="left:1190px;width:50.5px;text-align:right;top:431.89px;color:#858585">19</div>
<div class="cl" style="left:1271.6px;top:431.89px;color:#cccccc">    <span style="color:#9cdcfe">"params"</span> : <span style="color:#da70d6">[</span><span style="color:#da70d6">]</span>,</div>
<div class="a" style="left:1271.6px;top:453.4px;width:1px;height:22.8px;background:#404040;"></div>
<div class="cl" style="left:1190px;width:50.5px;text-align:right;top:454.69px;color:#858585">20</div>
<div class="cl" style="left:1271.6px;top:454.69px;color:#cccccc">    <span style="color:#9cdcfe">"database_column_definitions"</span>:</div>
<div class="a" style="left:1271.6px;top:476.2px;width:1px;height:22.8px;background:#404040;"></div>
<div class="cl" style="left:1190px;width:50.5px;text-align:right;top:477.49px;color:#858585">21</div>
<div class="cl" style="left:1271.6px;top:477.49px;color:#cccccc">    <span style="color:#da70d6">[</span></div>
<div class="a" style="left:1271.6px;top:499.0px;width:1px;height:22.8px;background:#404040;"></div>
<div class="a" style="left:1308.6px;top:499.0px;width:1px;height:22.8px;background:#404040;"></div>
<div class="cl" style="left:1190px;width:50.5px;text-align:right;top:500.29px;color:#858585">22</div>
<div class="cl" style="left:1271.6px;top:500.29px;color:#cccccc">        <span style="color:#179fff">{</span></div>
<div class="a" style="left:1271.6px;top:521.8px;width:1px;height:22.8px;background:#404040;"></div>
<div class="a" style="left:1308.6px;top:521.8px;width:1px;height:22.8px;background:#404040;"></div>
<div class="a" style="left:1345.6px;top:521.8px;width:1px;height:22.8px;background:#404040;"></div>
<div class="cl" style="left:1190px;width:50.5px;text-align:right;top:523.09px;color:#858585">23</div>
<div class="cl" style="left:1271.6px;top:523.09px;color:#cccccc">            <span style="color:#9cdcfe">"column"</span>: <span style="color:#ce9178">"Index"</span>,</div>
<div class="a" style="left:1271.6px;top:544.6px;width:1px;height:22.8px;background:#404040;"></div>
<div class="a" style="left:1308.6px;top:544.6px;width:1px;height:22.8px;background:#404040;"></div>
<div class="a" style="left:1345.6px;top:544.6px;width:1px;height:22.8px;background:#404040;"></div>
<div class="cl" style="left:1190px;width:50.5px;text-align:right;top:545.89px;color:#858585">24</div>
<div class="cl" style="left:1271.6px;top:545.89px;color:#cccccc">            <span style="color:#9cdcfe">"css_classes"</span>: <span style="color:#ce9178">"col-sm-2"</span>,</div>
<div class="a" style="left:1271.6px;top:567.4px;width:1px;height:22.8px;background:#404040;"></div>
<div class="a" style="left:1308.6px;top:567.4px;width:1px;height:22.8px;background:#404040;"></div>
<div class="a" style="left:1345.6px;top:567.4px;width:1px;height:22.8px;background:#404040;"></div>
<div class="cl" style="left:1190px;width:50.5px;text-align:right;top:568.69px;color:#858585">25</div>
<div class="cl" style="left:1271.6px;top:568.69px;color:#cccccc">            <span style="color:#9cdcfe">"show"</span>: <span style="color:#569cd6">false</span>,</div>
<div class="a" style="left:1271.6px;top:590.2px;width:1px;height:22.8px;background:#404040;"></div>
<div class="a" style="left:1308.6px;top:590.2px;width:1px;height:22.8px;background:#404040;"></div>
<div class="a" style="left:1345.6px;top:590.2px;width:1px;height:22.8px;background:#404040;"></div>
<div class="cl" style="left:1190px;width:50.5px;text-align:right;top:591.49px;color:#858585">26</div>
<div class="cl" style="left:1271.6px;top:591.49px;color:#cccccc">            <span style="color:#9cdcfe">"type"</span>: <span style="color:#ce9178">"label"</span>,</div>
<div class="a" style="left:1271.6px;top:613.0px;width:1px;height:22.8px;background:#404040;"></div>
<div class="a" style="left:1308.6px;top:613.0px;width:1px;height:22.8px;background:#404040;"></div>
<div class="a" style="left:1345.6px;top:613.0px;width:1px;height:22.8px;background:#404040;"></div>
<div class="cl" style="left:1190px;width:50.5px;text-align:right;top:614.29px;color:#858585">27</div>
<div class="cl" style="left:1271.6px;top:614.29px;color:#cccccc">            <span style="color:#9cdcfe">"default_value"</span>:<span style="color:#ce9178">""</span>,</div>
<div class="a" style="left:1271.6px;top:635.8px;width:1px;height:22.8px;background:#404040;"></div>
<div class="a" style="left:1308.6px;top:635.8px;width:1px;height:22.8px;background:#404040;"></div>
<div class="a" style="left:1345.6px;top:635.8px;width:1px;height:22.8px;background:#404040;"></div>
<div class="cl" style="left:1190px;width:50.5px;text-align:right;top:637.09px;color:#858585">28</div>
<div class="cl" style="left:1271.6px;top:637.09px;color:#cccccc">            <span style="color:#9cdcfe">"options"</span>: <span style="color:#ffd700">[</span><span style="color:#ffd700">]</span>,</div>
<div class="a" style="left:1271.6px;top:658.6px;width:1px;height:22.8px;background:#404040;"></div>
<div class="a" style="left:1308.6px;top:658.6px;width:1px;height:22.8px;background:#404040;"></div>
<div class="a" style="left:1345.6px;top:658.6px;width:1px;height:22.8px;background:#404040;"></div>
<div class="cl" style="left:1190px;width:50.5px;text-align:right;top:659.89px;color:#858585">29</div>
<div class="cl" style="left:1271.6px;top:659.89px;color:#cccccc">            <span style="color:#9cdcfe">"localized"</span>: <span style="color:#ffd700">[</span><span style="color:#ce9178">"name"</span><span style="color:#ffd700">]</span>,</div>
<div class="a" style="left:1271.6px;top:681.4px;width:1px;height:22.8px;background:#404040;"></div>
<div class="a" style="left:1308.6px;top:681.4px;width:1px;height:22.8px;background:#404040;"></div>
<div class="a" style="left:1345.6px;top:681.4px;width:1px;height:22.8px;background:#404040;"></div>
<div class="cl" style="left:1190px;width:50.5px;text-align:right;top:682.69px;color:#858585">30</div>
<div class="cl" style="left:1271.6px;top:682.69px;color:#cccccc">            <span style="color:#9cdcfe">"name"</span>:<span style="color:#ffd700">[</span><span style="color:#da70d6">{</span></div>
<div class="a" style="left:1271.6px;top:704.2px;width:1px;height:22.8px;background:#404040;"></div>
<div class="a" style="left:1308.6px;top:704.2px;width:1px;height:22.8px;background:#404040;"></div>
<div class="a" style="left:1345.6px;top:704.2px;width:1px;height:22.8px;background:#404040;"></div>
<div class="a" style="left:1382.6px;top:704.2px;width:1px;height:22.8px;background:#404040;"></div>
<div class="cl" style="left:1190px;width:50.5px;text-align:right;top:705.49px;color:#858585">31</div>
<div class="cl" style="left:1271.6px;top:705.49px;color:#cccccc">                <span style="color:#9cdcfe">"language_code"</span>:<span style="color:#ce9178">"en_us"</span>,</div>
<div class="a" style="left:1271.6px;top:727.0px;width:1px;height:22.8px;background:#404040;"></div>
<div class="a" style="left:1308.6px;top:727.0px;width:1px;height:22.8px;background:#404040;"></div>
<div class="a" style="left:1345.6px;top:727.0px;width:1px;height:22.8px;background:#404040;"></div>
<div class="a" style="left:1382.6px;top:727.0px;width:1px;height:22.8px;background:#404040;"></div>
<div class="cl" style="left:1190px;width:50.5px;text-align:right;top:728.29px;color:#858585">32</div>
<div class="cl" style="left:1271.6px;top:728.29px;color:#cccccc">                <span style="color:#9cdcfe">"string"</span> : <span style="color:#ce9178">"N/A"</span></div>
<div class="a" style="left:1271.6px;top:749.8px;width:1px;height:22.8px;background:#404040;"></div>
<div class="a" style="left:1308.6px;top:749.8px;width:1px;height:22.8px;background:#404040;"></div>
<div class="a" style="left:1345.6px;top:749.8px;width:1px;height:22.8px;background:#404040;"></div>
<div class="a" style="left:1382.6px;top:749.8px;width:1px;height:22.8px;background:#404040;"></div>
<div class="cl" style="left:1190px;width:50.5px;text-align:right;top:751.09px;color:#858585">33</div>
<div class="cl" style="left:1271.6px;top:751.09px;color:#cccccc">                <span style="color:#da70d6">}</span><span style="color:#ffd700">]</span></div>
<div class="a" style="left:1271.6px;top:772.6px;width:1px;height:22.8px;background:#404040;"></div>
<div class="a" style="left:1308.6px;top:772.6px;width:1px;height:22.8px;background:#404040;"></div>
<div class="cl" style="left:1190px;width:50.5px;text-align:right;top:773.89px;color:#858585">34</div>
<div class="cl" style="left:1271.6px;top:773.89px;color:#cccccc">        <span style="color:#179fff">}</span> ,</div>
<div class="a" style="left:1271.6px;top:795.4px;width:1px;height:22.8px;background:#404040;"></div>
<div class="a" style="left:1308.6px;top:795.4px;width:1px;height:22.8px;background:#404040;"></div>
<div class="cl" style="left:1190px;width:50.5px;text-align:right;top:796.69px;color:#858585">35</div>
<div class="cl" style="left:1271.6px;top:796.69px;color:#cccccc">        <span style="color:#179fff">{</span></div>
<div class="a" style="left:1271.6px;top:818.2px;width:1px;height:22.8px;background:#404040;"></div>
<div class="a" style="left:1308.6px;top:818.2px;width:1px;height:22.8px;background:#404040;"></div>
<div class="a" style="left:1345.6px;top:818.2px;width:1px;height:22.8px;background:#404040;"></div>
<div class="cl" style="left:1190px;width:50.5px;text-align:right;top:819.49px;color:#858585">36</div>
<div class="cl" style="left:1271.6px;top:819.49px;color:#cccccc">            <span style="color:#9cdcfe">"column"</span>: <span style="color:#ce9178">"Plugin"</span>,</div>
<div class="a" style="left:1336.4px;top:226.4px;width:2px;height:21px;background:#aeafad;"></div>
<div class="t" style="left:1208.96px;top:-0.37px;font-size:15.8px;color:#b4b4b4;font-weight:normal;letter-spacing:0px;font-family:'Liberation Sans',sans-serif;transform:scaleX(1.0679);transform-origin:0 0;">front</div>
<div class="t" style="left:1261.47px;top:-0.37px;font-size:15.8px;color:#b4b4b4;font-weight:normal;letter-spacing:0px;font-family:'Liberation Sans',sans-serif;transform:scaleX(1.0148);transform-origin:0 0;">plugins</div>
<div class="t" style="left:1330.41px;top:-0.37px;font-size:15.8px;color:#b4b4b4;font-weight:normal;letter-spacing:0px;font-family:'Liberation Sans',sans-serif;transform:scaleX(0.9423);transform-origin:0 0;">nmap_services</div>
<div class="t" style="left:1475.83px;top:-0.37px;font-size:15.8px;color:#b4b4b4;font-weight:normal;letter-spacing:0px;font-family:'Liberation Sans',sans-serif;transform:scaleX(0.9954);transform-origin:0 0;">config.json</div>
<div class="t" style="left:1567.76px;top:-0.37px;font-size:15.8px;color:#b4b4b4;font-weight:normal;letter-spacing:0px;font-family:'Liberation Sans',sans-serif;transform:scaleX(1.0696);transform-origin:0 0;">...</div>
<svg style="left:1248.7px;top:0.5px" width="8" height="12" viewBox="0 0 8 12"><path d="M0.8,0.5 L6.6,5.9 L0.8,11.4" fill="none" stroke="#b4b4b4" stroke-width="1.05"/></svg>
<svg style="left:1318.5px;top:0.5px" width="8" height="12" viewBox="0 0 8 12"><path d="M0.8,0.5 L6.6,5.9 L0.8,11.4" fill="none" stroke="#b4b4b4" stroke-width="1.05"/></svg>
<svg style="left:1437px;top:0.5px" width="8" height="12" viewBox="0 0 8 12"><path d="M0.8,0.5 L6.6,5.9 L0.8,11.4" fill="none" stroke="#b4b4b4" stroke-width="1.05"/></svg>
<svg style="left:1557.4px;top:0.5px" width="8" height="12" viewBox="0 0 8 12"><path d="M0.8,0.5 L6.6,5.9 L0.8,11.4" fill="none" stroke="#b4b4b4" stroke-width="1.05"/></svg>
<div class="t" style="left:1454.16px;top:-0.12px;font-size:15.5px;color:#cbcb41;font-weight:normal;letter-spacing:0px;font-family:'Liberation Sans',sans-serif;transform:scaleX(1.3142);transform-origin:0 0;">{}</div>
<div class="a" style="left:1194px;top:834px;width:983px;height:9px;background:#232323;"></div>
<div class="a" style="left:1194px;top:842px;width:55px;height:1px;background:#3a434c;"></div>
<div class="a" style="left:1194px;top:653px;width:1px;height:190px;background:#2b3138;"></div>
<div class="a" style="left:273px;top:475px;width:920px;height:368px;background:#1f1f1f;"></div>
<div class="a" style="left:273px;top:475px;width:920px;height:368px;overflow:hidden">
<div class="cl" style="left:19.0px;top:-12.91px;color:#cccccc"><span style="color:#179fff">}</span>,</div>
<div class="cl" style="left:19.0px;top:9.89px;color:#cccccc"><span style="color:#179fff">{</span></div>
<div class="a" style="left:19.00px;top:31.40px;width:1px;height:22.8px;background:#404040"></div>
<div class="cl" style="left:19.0px;top:32.69px;color:#cccccc">    <span style="color:#9cdcfe">"function"</span>: <span style="color:#ce9178">"CMD"</span>,</div>
<div class="a" style="left:19.00px;top:54.20px;width:1px;height:22.8px;background:#404040"></div>
<div class="cl" style="left:19.0px;top:55.49px;color:#cccccc">    <span style="color:#9cdcfe">"type"</span>: <span style="color:#ce9178">"text"</span>,</div>
<div class="a" style="left:19.00px;top:77.00px;width:1px;height:22.8px;background:#404040"></div>
<div class="cl" style="left:19.0px;top:78.29px;color:#cccccc">    <span style="color:#9cdcfe">"default_value"</span>:<span style="color:#ce9178">"SELECT  dv.dev_Name as Object_PrimaryID, cast('http://' || dv.dev_LastIP as</span></div>
<div class="a" style="left:19.00px;top:99.80px;width:1px;height:22.8px;background:#404040"></div>
<div class="cl" style="left:19.0px;top:101.09px;color:#cccccc">    <span style="color:#ce9178">VARCHAR(100)) || ':' || cast( SUBSTR(ns.Port ,0, INSTR(ns.Port , '/')) as VARCHAR(100)) as</span></div>
<div class="a" style="left:19.00px;top:122.60px;width:1px;height:22.8px;background:#404040"></div>
<div class="cl" style="left:19.0px;top:123.89px;color:#cccccc">    <span style="color:#ce9178">Object_SecondaryID,  datetime() as DateTime,  ns.Service as Watched_Value1,        ns.State</span></div>
<div class="a" style="left:19.00px;top:145.40px;width:1px;height:22.8px;background:#404040"></div>
<div class="cl" style="left:19.0px;top:146.69px;color:#cccccc">    <span style="color:#ce9178">as Watched_Value2,        'null' as Watched_Value3,        'null' as Watched_Value4,</span></div>
<div class="a" style="left:19.00px;top:168.20px;width:1px;height:22.8px;background:#404040"></div>
<div class="cl" style="left:19.0px;top:169.49px;color:#cccccc">    <span style="color:#ce9178">ns.Extra as Extra, dv.dev_MAC as ForeignKey        FROM (SELECT * FROM Nmap_Scan) ns LEFT</span></div>
<div class="a" style="left:19.00px;top:191.00px;width:1px;height:22.8px;background:#404040"></div>
<div class="cl" style="left:19.0px;top:192.29px;color:#cccccc">    <span style="color:#ce9178">JOIN (SELECT dev_Name, dev_MAC, dev_LastIP FROM Devices) dv   ON ns.MAC = dv.dev_MAC"</span>,</div>
<div class="a" style="left:19.00px;top:213.80px;width:1px;height:22.8px;background:#404040"></div>
<div class="cl" style="left:19.0px;top:215.09px;color:#cccccc">    <span style="color:#9cdcfe">"options"</span>: <span style="color:#ffd700">[</span><span style="color:#ffd700">]</span>,</div>
<div class="a" style="left:19.00px;top:236.60px;width:1px;height:22.8px;background:#404040"></div>
<div class="cl" style="left:19.0px;top:237.89px;color:#cccccc">    <span style="color:#9cdcfe">"localized"</span>: <span style="color:#ffd700">[</span><span style="color:#ce9178">"name"</span>, <span style="color:#ce9178">"description"</span><span style="color:#ffd700">]</span>,</div>
<div class="a" style="left:19.00px;top:259.40px;width:1px;height:22.8px;background:#404040"></div>
<div class="cl" style="left:19.0px;top:260.69px;color:#cccccc">    <span style="color:#9cdcfe">"name"</span> : <span style="color:#ffd700">[</span><span style="color:#da70d6">{</span></div>
<div class="a" style="left:19.00px;top:282.20px;width:1px;height:22.8px;background:#404040"></div>
<div class="a" style="left:56.00px;top:282.20px;width:1px;height:22.8px;background:#404040"></div>
<div class="cl" style="left:19.0px;top:283.49px;color:#cccccc">        <span style="color:#9cdcfe">"language_code"</span>:<span style="color:#ce9178">"en_us"</span>,</div>
<div class="a" style="left:19.00px;top:305.00px;width:1px;height:22.8px;background:#404040"></div>
<div class="a" style="left:56.00px;top:305.00px;width:1px;height:22.8px;background:#404040"></div>
<div class="cl" style="left:19.0px;top:306.29px;color:#cccccc">        <span style="color:#9cdcfe">"string"</span> : <span style="color:#ce9178">"SQL to run"</span></div>
<div class="a" style="left:19.00px;top:327.80px;width:1px;height:22.8px;background:#404040"></div>
<div class="cl" style="left:19.0px;top:329.09px;color:#cccccc">    <span style="color:#da70d6">}</span><span style="color:#ffd700">]</span>,</div>
<div class="a" style="left:19.00px;top:350.60px;width:1px;height:22.8px;background:#404040"></div>
<div class="cl" style="left:19.0px;top:351.89px;color:#cccccc">    <span style="color:#9cdcfe">"description"</span>: <span style="color:#ffd700">[</span><span style="color:#da70d6">{</span></div>
</div>
<svg style="left:0;top:0" width="2177" height="843"><defs><filter id="sh" x="-5%" y="-50%" width="110%" height="200%"><feGaussianBlur in="SourceAlpha" stdDeviation="1.25"/><feOffset dx="3" dy="3.4" result="b"/><feFlood flood-color="#6a6a6a"/><feComposite in2="b" operator="in"/><feMerge><feMergeNode/><feMergeNode in="SourceGraphic"/></feMerge></filter></defs><g filter="url(#sh)">
<path d="M295.6,122.5 L313.0,130.2 L314.1,117.9 Z" fill="#ff0000"/><path d="M312.5,124.0 L1336.5,212.0" stroke="#ff0000" stroke-width="3.6" fill="none"/>
<path d="M193.3,131.7 L210.1,140.6 L212.0,128.3 Z" fill="#ff0000"/><path d="M210.1,134.3 L1321.4,307.5" stroke="#ff0000" stroke-width="3.6" fill="none"/>
<path d="M408.9,243.7 L421.1,258.3 L427.5,247.6 Z" fill="#ff0000"/><path d="M423.5,252.4 L921.9,551.5" stroke="#ff0000" stroke-width="3.6" fill="none"/>
</g></svg>
</body></html>
